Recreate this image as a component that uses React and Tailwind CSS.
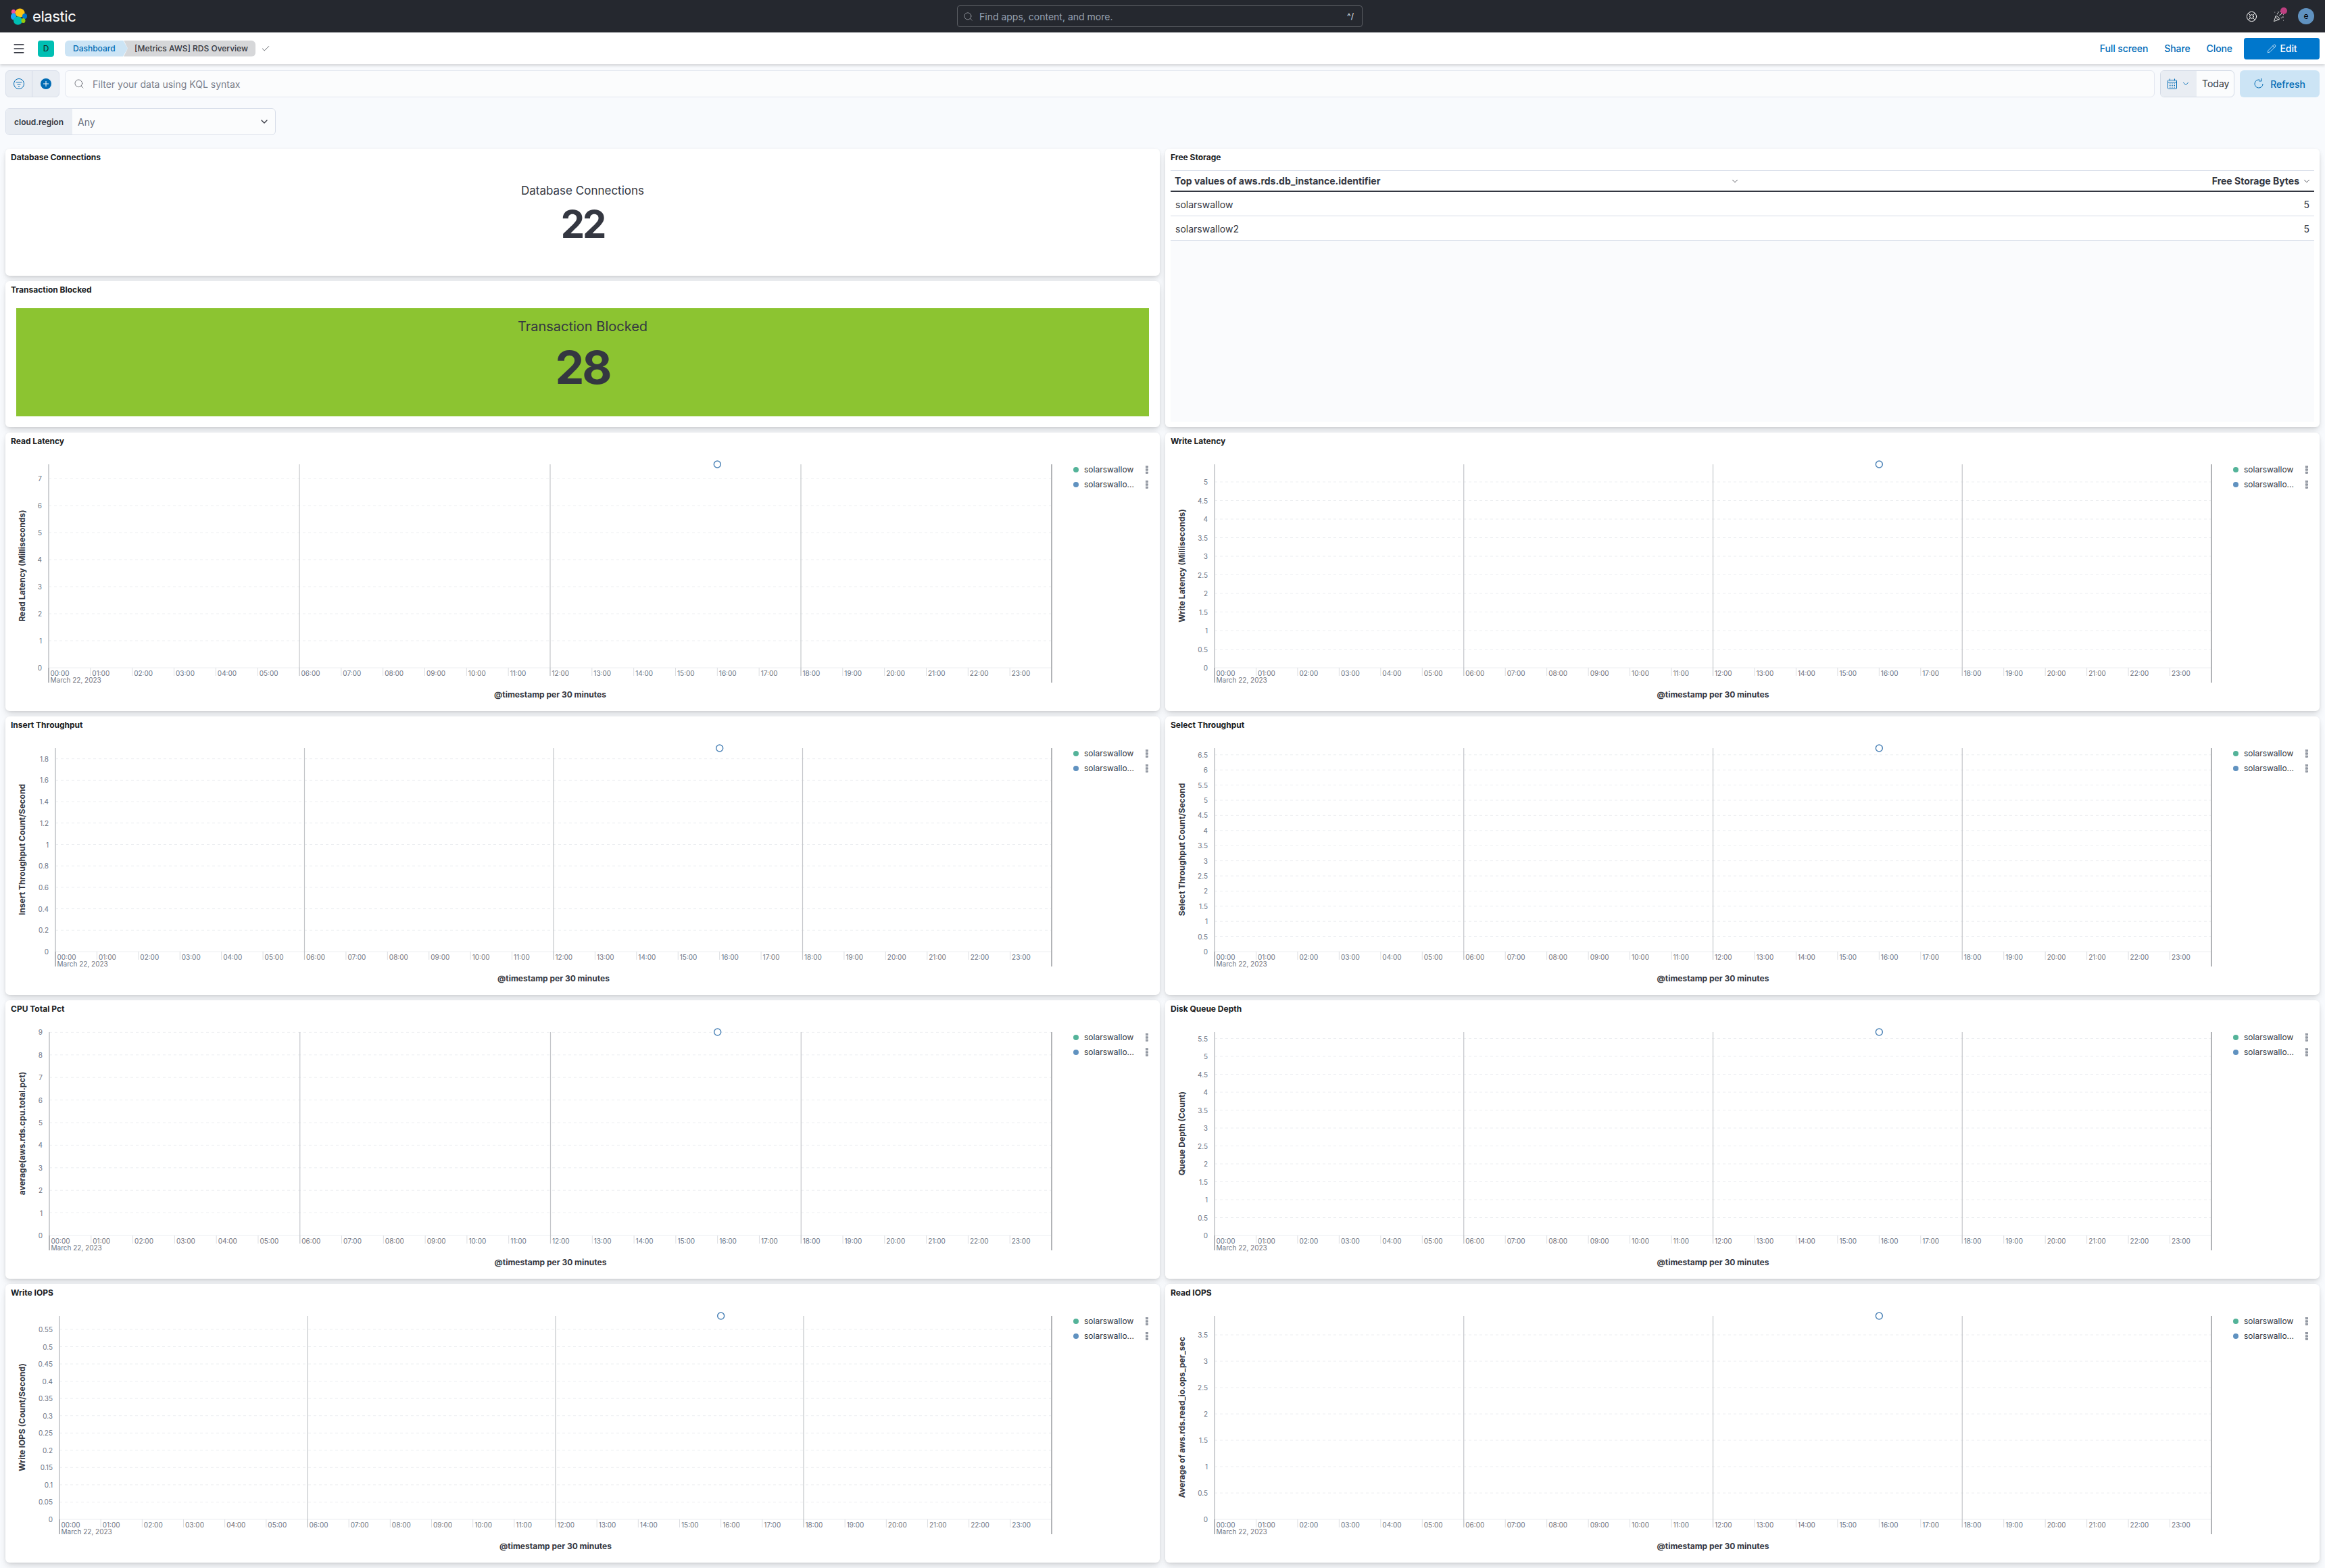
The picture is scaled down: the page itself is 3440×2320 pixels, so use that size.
import React from "react";
import { Search, ChevronDown, Check, Pencil, LifeBuoy, PartyPopper, Menu } from "lucide-react";

const range = (n, step, dec) => Array.from({ length: n }, (_, i) => Number((i * step).toFixed(dec)));

const charts = [
  { title: "Read Latency", y: "Read Latency (Milliseconds)", x0: 64, ticks: range(8, 1, 0), gap: 40 },
  { title: "Write Latency", y: "Write Latency (Milliseconds)", x0: 73, ticks: range(11, 0.5, 1), gap: 27.5 },
  { title: "Insert Throughput", y: "Insert Throughput Count/Second", x0: 74, ticks: range(10, 0.2, 1), gap: 31.7 },
  { title: "Select Throughput", y: "Select Throughput Count/Second", x0: 73, ticks: range(14, 0.5, 1), gap: 22.4 },
  { title: "CPU Total Pct", y: "average(aws.rds.cpu.total.pct)", x0: 65, ticks: range(10, 1, 0), gap: 33.4 },
  { title: "Disk Queue Depth", y: "Queue Depth (Count)", x0: 73, ticks: range(12, 0.5, 1), gap: 26.5 },
  { title: "Write IOPS", y: "Write IOPS (Count/Second)", x0: 80, ticks: range(12, 0.05, 2), gap: 25.55 },
  { title: "Read IOPS", y: "Average of aws.rds.read_io.ops_per_sec", x0: 73, ticks: range(8, 0.5, 1), gap: 39 },
];

const END = 1548;
const Y0 = 348;
const TOP = 47;

function Chart({ c }) {
  const step = (END - c.x0) / 24;
  const hours = Array.from({ length: 24 }, (_, i) => i);
  return (
    <svg width="1570" height="386" viewBox="0 26 1570 386" className="block shrink-0">
      {c.ticks.map((t, i) => {
        const y = Y0 - i * c.gap;
        return (
          <g key={t}>
            <line x1={c.x0} x2={END} y1={y} y2={y} stroke="#eceef1" strokeWidth="1" strokeDasharray={i === 0 ? undefined : "4 4"} />
            <text x={c.x0 - 10} y={y} textAnchor="end" dominantBaseline="central" fontSize="10" fill="#6f7582">{t}</text>
          </g>
        );
      })}
      {hours.map((h) => {
        const x = c.x0 + h * step;
        return (
          <g key={h}>
            <line x1={x} x2={x} y1={Y0} y2={360} stroke="#dcdee2" strokeWidth="1" />
            <text x={x + 2.5} y={356} dominantBaseline="central" fontSize="10" fill="#6f7582">{`${String(h).padStart(2, "0")}:00`}</text>
          </g>
        );
      })}
      {[6, 12, 18].map((h) => (
        <line key={h} x1={c.x0 + h * step} x2={c.x0 + h * step} y1={TOP} y2={360} stroke="#c4c6ca" strokeWidth="1.2" />
      ))}
      <line x1={c.x0} x2={c.x0} y1={TOP} y2={Y0} stroke="#cfd1d4" strokeWidth="2" />
      <line x1={c.x0} x2={c.x0} y1={Y0} y2={370} stroke="#b4b6ba" strokeWidth="2" />
      <line x1={END} x2={END} y1={TOP} y2={370} stroke="#b2b4b7" strokeWidth="2" />
      <text x={c.x0 + 2.5} y={366} dominantBaseline="central" fontSize="10" fill="#6f7582">March 22, 2023</text>
      <text x={24} y={197} transform="rotate(-90 24 197)" textAnchor="middle" dominantBaseline="central" fontSize="12" fontWeight="700" fill="#343741">{c.y}</text>
      <text x={(c.x0 + END) / 2} y={387} textAnchor="middle" dominantBaseline="central" fontSize="12" fontWeight="700" fill="#343741">@timestamp per 30 minutes</text>
      <circle cx={c.x0 + ((END - c.x0) * 2) / 3} cy={TOP} r="5" fill="#ffffff" stroke="#4f85b8" strokeWidth="1.5" />
    </svg>
  );
}

function Dots() {
  return (
    <svg width="4" height="12" viewBox="0 0 4 12" className="block">
      <rect x="0.5" y="0.5" width="3" height="2.4" fill="#9a9fa9" stroke="#69707d" strokeWidth="0.6" />
      <rect x="0.5" y="4.8" width="3" height="2.4" fill="#9a9fa9" stroke="#69707d" strokeWidth="0.6" />
      <rect x="0.5" y="9.1" width="3" height="2.4" fill="#9a9fa9" stroke="#69707d" strokeWidth="0.6" />
    </svg>
  );
}

function LegendRow({ color, label }) {
  return (
    <div className="flex items-center h-[22px]">
      <span className="w-2 h-2 rounded-full shrink-0" style={{ backgroundColor: color }} />
      <span className="ml-2 w-[91px] text-[12px] text-[#343741] leading-[22px]">{label}</span>
      <Dots />
    </div>
  );
}

function Panel({ title, children, className = "" }) {
  return (
    <div className={`bg-white rounded-[6px] shadow-[0_1px_4px_-1px_rgba(0,0,0,0.1),0_3px_8px_-1px_rgba(0,0,0,0.07),0_6px_12px_-1px_rgba(0,0,0,0.05),0_12px_15px_-1px_rgba(0,0,0,0.03)] flex flex-col overflow-visible ${className}`}>
      <div className="h-[26px] shrink-0 pl-2 text-[12px] font-bold leading-[26px] text-[#1a1c21]">{title}</div>
      {children}
    </div>
  );
}

function ChartPanel({ c }) {
  return (
    <Panel title={c.title} className="h-[412px]">
      <div className="flex">
        <Chart c={c} />
        <div className="pt-[18px] pl-[10px] flex flex-col">
          <LegendRow color="#54b399" label="solarswallow" />
          <LegendRow color="#6092c0" label="solarswallo..." />
        </div>
      </div>
    </Panel>
  );
}

function ElasticLogo() {
  return (
    <svg width="24" height="25" viewBox="0 0 24 25">
      <ellipse cx="4" cy="5.5" rx="3.2" ry="3.5" fill="#ee5097" />
      <ellipse cx="13.5" cy="7" rx="7" ry="6.5" fill="#fec514" />
      <ellipse cx="4" cy="12.5" rx="4" ry="5" fill="#1ba9f5" />
      <ellipse cx="20.5" cy="12" rx="3.5" ry="4" fill="#0077cc" />
      <ellipse cx="10.5" cy="18.5" rx="6.5" ry="6.2" fill="#00bfb3" />
      <ellipse cx="18.5" cy="18.5" rx="3" ry="3.5" fill="#93c90e" />
    </svg>
  );
}

function FilterIcon() {
  return (
    <svg width="16" height="16" viewBox="0 0 16 16" fill="none" stroke="#006bb4" strokeWidth="1">
      <circle cx="8" cy="8" r="7.5" />
      <path d="M3.5 5.5h9M5.5 8.5h5M7 11.5h2" />
    </svg>
  );
}

function PlusIcon() {
  return (
    <svg width="16" height="16" viewBox="0 0 16 16">
      <circle cx="8" cy="8" r="8" fill="#006bb4" />
      <path d="M8 4v8M4 8h8" stroke="#ffffff" strokeWidth="1" />
    </svg>
  );
}

function CalendarIcon() {
  return (
    <svg width="14" height="16" viewBox="0 0 14 16" fill="none" stroke="#006bb4" strokeWidth="1">
      <rect x="0.5" y="2.5" width="13" height="13" rx="1" />
      <path d="M0.5 5.5h13M3.5 0.5v3M10.5 0.5v3" />
      <path d="M3 8h1.5M6.2 8h1.5M9.5 8h1.5M3 10.5h1.5M6.2 10.5h1.5M9.5 10.5h1.5M3 13h1.5M6.2 13h1.5M9.5 13h1.5" />
    </svg>
  );
}

function RefreshIcon() {
  return (
    <svg width="14" height="16" viewBox="0 0 14 16" fill="none" stroke="#006bb4" strokeWidth="1">
      <path d="M8.5 2.2A6 6 0 1 0 13 8" />
      <path d="M11 0.5v4h-3.5" transform="translate(0 -0.5)" />
    </svg>
  );
}

export default function App() {
  return (
    <div className="w-full min-h-[2320px] bg-[#f8fafd] [font-family:Inter,sans-serif] text-[#343741]">
      <header className="h-12 bg-[#25282f] flex items-center pr-4 pl-4">
        <div className="flex items-center w-[1400px] shrink-0">
          <ElasticLogo />
          <span className="ml-2 text-[22px] leading-none text-white tracking-[-0.4px]">elastic</span>
        </div>
        <div className="w-[600px] h-8 rounded-[4px] border border-[#5a5d63] flex items-center pl-2 pr-3 shrink-0">
          <Search size={15} strokeWidth={1} className="text-[#c5c9d0]" />
          <span className="ml-[9px] text-[14px] text-[#98a2b3]">Find apps, content, and more.</span>
          <span className="ml-auto text-[12px] text-[#dfe5ef]">^/</span>
        </div>
        <div className="flex items-center justify-end flex-1">
          <LifeBuoy size={17} strokeWidth={1.4} className="text-white mr-[23px]" />
          <span className="relative mr-[20px]">
            <PartyPopper size={17} strokeWidth={1.2} className="text-white" />
            <span className="absolute -top-[5px] -right-[4px] w-[10px] h-[10px] rounded-full bg-[#bd3f80]" />
          </span>
          <span className="w-6 h-6 rounded-full bg-[#6092c0] flex items-center justify-center text-[12px] text-[#000000]">e</span>
        </div>
      </header>

      <div className="h-[47px] bg-white shadow-[0_2px_4px_rgba(0,0,0,0.16)] flex items-center pr-2 relative">
        <Menu size={20} strokeWidth={2} className="ml-[18px] text-[#343741]" />
        <span className="ml-[18px] w-6 h-6 rounded-[4px] bg-[#00bfb3] flex items-center justify-center text-[12px] text-[#1a1c21]">D</span>
        <span className="ml-4 w-[93px] h-6 bg-[#cce4f5] text-[#006bb4] text-[12px] font-medium leading-6 pl-3 rounded-l-[6px] [clip-path:polygon(0_0,calc(100%-7px)_0,100%_50%,calc(100%-7px)_100%,0_100%)]">Dashboard</span>
        <span className="-ml-[6px] w-[195px] h-6 bg-[#d6d7d9] text-[#343741] text-[12px] font-medium leading-6 pl-[16px] rounded-r-[6px] [clip-path:polygon(0_0,100%_0,100%_100%,0_100%,6px_50%)]">[Metrics AWS] RDS Overview</span>
        <Check size={14} strokeWidth={1.3} className="ml-[8px] text-[#343741]" />
        <div className="ml-auto flex items-center text-[14px] font-medium text-[#006bb8] tracking-[-0.1px]">
          <span>Full screen</span>
          <span className="ml-[24px]">Share</span>
          <span className="ml-[24px]">Clone</span>
          <span className="ml-[17px] w-[112px] h-8 rounded-[4px] bg-[#0077cc] text-white flex items-center justify-center gap-[6px]">
            <Pencil size={14} strokeWidth={1.3} />
            Edit
          </span>
        </div>
      </div>

      <div className="flex items-stretch h-10 mt-[9px] px-2">
        <div className="w-20 rounded-[6px] border border-[#d9dfea] bg-[#e9edf3] flex shrink-0">
          <span className="w-10 flex items-center justify-center border-r border-[#d3dae6]"><FilterIcon /></span>
          <span className="w-10 flex items-center justify-center"><PlusIcon /></span>
        </div>
        <div className="ml-2 flex-1 rounded-[6px] border border-[#e3e7f0] bg-[#fbfcfd] flex items-center pl-3">
          <Search size={16} strokeWidth={1} className="text-[#343741]" />
          <span className="ml-3 text-[14px] text-[#7a808c]">Filter your data using KQL syntax</span>
        </div>
        <div className="ml-2 w-[110px] rounded-[6px] border border-[#d3dae6] flex overflow-hidden bg-[#fbfcfd] shrink-0">
          <span className="w-[53px] bg-[#e9edf3] flex items-center pl-[10px] gap-[6px]">
            <CalendarIcon />
            <ChevronDown size={14} strokeWidth={1.6} className="text-[#006bb4]" />
          </span>
          <span className="ml-2 text-[14px] leading-[38px] text-[#343741]">Today</span>
        </div>
        <div className="ml-2 w-[118px] rounded-[6px] bg-[#cce4f5] text-[#006bb4] text-[14px] font-medium flex items-center justify-center gap-[10px] shrink-0">
          <RefreshIcon />
          Refresh
        </div>
      </div>

      <div className="px-2 mt-4">
        <div className="w-[400px] h-10 rounded-[6px] border border-[#d9dfea] bg-[#fbfcfd] flex items-center overflow-hidden">
          <span className="w-[98px] h-full bg-[#e9edf3] text-[12px] font-semibold leading-[40px] pl-3">cloud.region</span>
          <span className="ml-2 text-[14px] text-[#69707d]">Any</span>
          <ChevronDown size={16} strokeWidth={2} className="ml-auto mr-2 text-[#343741]" />
        </div>
      </div>

      <main className="grid grid-cols-2 gap-2 px-2 mt-5">
        <div className="h-[412px] flex flex-col gap-2">
          <Panel title="Database Connections" className="h-[188px]">
            <div className="flex flex-col items-center pt-[23px]">
              <div className="text-[17px] leading-[26px] text-[#343741]">Database Connections</div>
              <div className="mt-[5px] text-[56px] leading-[64px] font-bold text-[#343741] tracking-[-3px]">22</div>
            </div>
          </Panel>
          <Panel title="Transaction Blocked" className="flex-1">
            <div className="mx-4 mt-[14px] h-[160px] bg-[#8cc431] flex flex-col items-center pt-[12px]">
              <div className="text-[20px] leading-[30px] text-[#343741]">Transaction Blocked</div>
              <div className="mt-[9px] text-[68px] leading-[72px] font-bold text-[#343741] tracking-[-3px]">28</div>
            </div>
          </Panel>
        </div>
        <Panel title="Free Storage" className="h-[412px]">
          <div className="mx-2 mt-[6px] mb-2 flex-1 flex flex-col bg-[#fafbfd]">
            <div className="h-[32px] bg-white border-t border-[#d3dae6] border-b-2 border-b-[#343741] flex items-center text-[14px] font-bold text-[#343741] pl-[6px] pr-[4px]">
              <span className="w-[822px]">Top values of aws.rds.db_instance.identifier</span>
              <ChevronDown size={14} strokeWidth={1.4} />
              <span className="ml-auto">Free Storage Bytes</span>
              <ChevronDown size={14} strokeWidth={1.4} className="ml-[4px]" />
            </div>
            {["solarswallow", "solarswallow2"].map((n) => (
              <div key={n} className="h-9 pt-px bg-white border-b border-[#d3dae6] flex items-center justify-between px-[7px] text-[14px] text-[#343741]">
                <span>{n}</span>
                <span>5</span>
              </div>
            ))}
          </div>
        </Panel>
        {charts.map((c) => (
          <ChartPanel key={c.title} c={c} />
        ))}
      </main>
    </div>
  );
}
